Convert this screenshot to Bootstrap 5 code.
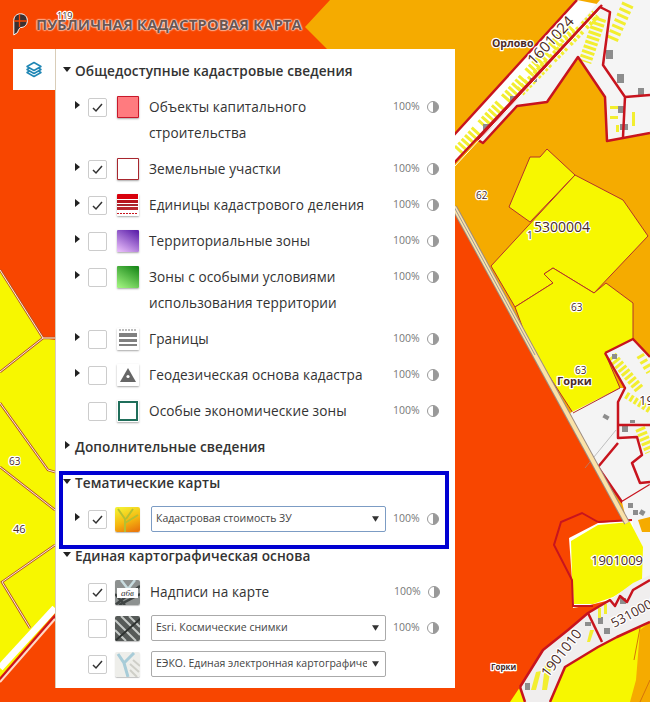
<!DOCTYPE html>
<html lang="ru">
<head>
  <meta charset="UTF-8">
  <title>Публичная кадастровая карта</title>
  <link href="https://cdn.jsdelivr.net/npm/bootstrap@5.3.0/dist/css/bootstrap.min.css" rel="stylesheet">
  <style>
    html, body { margin: 0; background: #f84600; }
    .map-page { position: relative; width: 650px; height: 702px; overflow: hidden; font-family: "Open Sans", sans-serif; }
    .map-canvas { position: absolute; left: 0; top: 0; }
    .map-canvas text { font-family: "Open Sans", sans-serif; fill: #4a2a26; paint-order: stroke; stroke: #fff; stroke-width: 2.5px; stroke-linejoin: round; }
    .map-title { position: absolute; left: 13px; top: 13px; gap: 8px; }
    .map-title span { font-size: 15px; font-weight: 700; color: #6d5650; text-shadow: 0 0 2px #fff, 0 0 2px #fff, 0 0 1px #fff; }
    .layers-win { position: absolute; left: 13px; top: 49px; }
    .layers-tab { width: 42px; height: 41px; background: #fff; }
    .layers-box { width: 400px; height: 639px; background: #fff; border-left: 1px solid #d9cdb8; padding-top: 4px; color: #333; }
    .sec-head { height: 36px; padding-left: 7px; font-size: 13.6px; font-weight: 600; gap: 4px; color: #333; letter-spacing: .08px; }
    .sec-head.push { margin-top: 1px; }
    .lyr-row { padding: 5px 0 5px 19px; }
    .lyr-cell { height: 26px; flex: none; }
    .tri-right { width: 0; height: 0; border-left: 5px solid #222; border-top: 4px solid transparent; border-bottom: 4px solid transparent; margin-top: -4px; }
    .tri-down { width: 0; height: 0; border-top: 5px solid #222; border-left: 4px solid transparent; border-right: 4px solid transparent; margin-top: -4px; }
    .sec-head .tri-right { margin-left: 2px; margin-right: 1px; }
    .cell-tri { width: 13px; }
    .cell-check { width: 19px; }
    .cell-check .form-check-input { width: 19px; height: 19px; margin: 0; border: 1px solid #ccc; border-radius: 2px; box-shadow: none; background-color: #fff; }
    .cell-check .form-check-input:checked { background-color: #fff; border-color: #ccc; background-image: url("data:image/svg+xml,%3csvg xmlns='http://www.w3.org/2000/svg' viewBox='0 0 19 19'%3e%3cpath fill='none' stroke='%23333' stroke-width='1.500' d='M5 10l3 3 6-7'/%3e%3c/svg%3e"); background-size: 19px 19px; }
    .cell-swatch { width: 22px; margin-left: 10px; }
    .cell-swatch svg { display: block; box-shadow: 0 1px 2px rgba(0,0,0,.35); border-radius: 1px; }
    .cell-thumb { width: 25px; margin-left: 8px; }
    .cell-thumb svg { display: block; box-shadow: 0 1px 1px rgba(0,0,0,.25); border-radius: 2px; }
    .lyr-name { width: 244px; margin-left: 10px; font-size: 13.6px; line-height: 26px; color: #333; letter-spacing: .1px; flex: none; }
    .cell-pct { width: 26px; font-size: 10.5px; color: #777; }
    .cell-half { margin-left: 8px; }
    .map-select.form-select { width: 235px; height: 26px; margin-left: 11px; margin-right: 7px; flex: none; padding: 0 18px 0 4px; font-size: 10.5px; font-family: "Open Sans", sans-serif; color: #444; border: 1px solid #aaa; border-radius: 2px; background-size: 7px 6px; background-position: right 6px center; background-image: url("data:image/svg+xml,%3csvg xmlns='http://www.w3.org/2000/svg' viewBox='0 0 9 7'%3e%3cpath fill='%23333' d='M0 0h9L4.500 7z'/%3e%3c/svg%3e"); box-shadow: none; }
    .map-select.sel-active { border-color: #7c9cc4; }
    .mark-frame { position: absolute; left: 59px; top: 471px; width: 390px; height: 78px; border: 4px solid #0000d2; pointer-events: none; }
  </style>
</head>
<body>
<div class="map-page">

  <!-- карта -->
  <svg class="map-canvas" width="650" height="702" viewBox="0 0 650 702">
    <rect width="650" height="702" fill="#f84600"/>
    <polygon fill="#f5ab00" points="330,0 305,27 340,62 454,207 627,523 650,523 650,0"/>

    <!-- левая часть -->
    <polygon fill="#f7f700" points="0,270 43,338 55,340 55,613 0,677"/>
    <g fill="none" stroke="#b5502a" stroke-width="2.5">
      <path d="M0 270L43 338H55M43 338L0 372M0 403L48 470L55 472M0 467L55 510M55 545L2 582L30 628"/>
    </g>
    <g fill="none" stroke="#fff2d8" stroke-width="1">
      <path d="M0 270L43 338H55M43 338L0 372M0 403L48 470L55 472M0 467L55 510M55 545L2 582L30 628"/>
    </g>
    <path d="M55 608L0 668" stroke="#fff" stroke-width="7" fill="none"/>
    <path d="M55 616L0 679" stroke="#c8141e" stroke-width="2" fill="none"/>
    <path d="M55 619L0 682" stroke="#ffd9c8" stroke-width="2" fill="none"/>

    <!-- верхняя полоса -->
    <polygon fill="#fff" points="454,135 577,0 602,5 454,163"/>
    <polygon fill="#f5f5f5" points="600,0 650,0 650,133 607,141 605,97 578,57 547,102 517,106 483,143 478,140"/>
    <path d="M458 151L574 23" stroke="#f2ee30" stroke-width="11" fill="none" stroke-dasharray="3 2 3 2 3 2 3 2 3 2 3 7"/>
    <path d="M520 92L596 14" stroke="#f2ee30" stroke-width="10" fill="none" stroke-dasharray="3 2 3 2 3 2 3 5"/>
    <path d="M600 18L585 62" stroke="#f2ee30" stroke-width="13" fill="none" stroke-dasharray="3 2"/>
    <path d="M628 4L612 40" stroke="#f2ee30" stroke-width="12" fill="none" stroke-dasharray="3 3"/>
    <g fill="#8d8d8d">
      <rect x="606" y="50" width="7" height="9"/><rect x="617" y="74" width="7" height="9"/><rect x="638" y="88" width="6" height="7"/>
      <rect x="618" y="106" width="7" height="7"/><rect x="620" y="124" width="8" height="6"/><rect x="483" y="124" width="6" height="6"/>
      <rect x="510" y="96" width="6" height="5"/><rect x="530" y="78" width="7" height="4"/>
    </g>
    <g fill="#f2ee30"><rect x="610" y="106" width="8" height="3"/><rect x="610" y="116" width="8" height="3"/><rect x="616" y="125" width="3" height="7"/><rect x="632" y="112" width="3" height="14"/></g>
    <g fill="none" stroke="#c8141e" stroke-width="2.500" stroke-linejoin="round">
      <path d="M454 135L577 0M454 163L602 5"/>
      <path d="M478 140L600 7L610 12L603 65L625 97L650 95M478 140L483 143L517 106L547 102L578 57L605 97L607 141L650 133M625 97L623 137"/>
    </g>
    <path d="M454 167L600 10" stroke="#fff" stroke-width="1" fill="none"/>

    <!-- участки -->
    <g fill="#f7f700" stroke="#b4322a" stroke-width="1">
      <polygon points="530,157 540,157 547,149 575,175 530,222 509,207"/>
      <polygon points="575,175 623,200 648,236 594,293 553,268 544,274 553,283 515,307 491,266"/>
      <polygon points="515,307 553,283 544,274 553,268 594,293 606,283 633,303 633,340 605,353 620,388 573,413 529,345"/>
    </g>

    <!-- правая середина -->
    <polygon fill="#f4f4f4" points="570,413 620,388 625,388 618,402 618,443 598,467 622,502 650,485 650,357 633,339 605,353 625,388 618,402 618,443 598,467 598,472"/>
    <path d="M612 356L640 390" stroke="#f2ee30" stroke-width="10" fill="none" stroke-dasharray="3 2"/>
    <path d="M640 355L650 372" stroke="#f2ee30" stroke-width="8" fill="none" stroke-dasharray="3 3"/>
    <path d="M626 395L650 410" stroke="#f2ee30" stroke-width="7" fill="none" stroke-dasharray="3 2"/>
    <path d="M640 428L650 452" stroke="#f2ee30" stroke-width="10" fill="none" stroke-dasharray="3 2"/>
    <g fill="#8d8d8d"><rect x="612" y="354" width="5" height="5"/><rect x="622" y="426" width="6" height="6"/><rect x="630" y="420" width="5" height="3"/><rect x="603" y="415" width="6" height="4" transform="rotate(30 606 417)"/></g>
    <path d="M585 468L616 430" stroke="#999" stroke-width=".6" fill="none"/>
    <g fill="none" stroke="#c8141e" stroke-width="2.500" stroke-linejoin="round">
      <path d="M605 353L633 339L650 357M605 353L625 388L618 402V438L637 437L642 455L632 463L640 483L650 482M618 425H650"/>
      <path d="M618 443L598 467L622 502L650 485"/>
    </g>
    <path d="M573 413L620 388" stroke="#b4322a" stroke-width="1"/>

    <!-- низ справа -->
    <polygon fill="#f5f5f5" points="622,502 650,485 650,600 620,590 612,530 627,523"/>
    <polygon fill="#f5ab00" points="638,520 650,517 650,532 642,532"/>
    <g fill="#8d8d8d"><rect x="628" y="503" width="5" height="5"/><rect x="633" y="510" width="5" height="5"/><rect x="640" y="510" width="5" height="5" transform="rotate(30 642 512)"/></g>
    <polygon fill="#fff" points="569,538 598,523 632,520 640,560 640,585 610,600 590,605 573,608 572,580"/>
    <polygon fill="#f7f700" points="571,541 598,525 630,522 643,547 642,579 613,597 593,604 574,604 572,577"/>
    <path d="M598 522L632 520M598 522L582 513L561 522L554 545L572 580L573 606H593" fill="none" stroke="#c8141e" stroke-width="2"/>

    <polygon fill="#f7f700" points="510,702 520,687 525,702"/>
    <polygon fill="#f7f700" points="550,702 565,667 598,647 617,637 650,622 650,702"/>
    <polygon fill="#f5ab00" points="630,702 636,680 640,630 650,622 650,702"/>
    <path d="M640 702L650 680M634 660L640 628" stroke="#d8740a" stroke-width="1" fill="none"/>
    <polygon fill="#f0eeee" points="520,687 543,650 568,630 588,613 610,600 633,583 650,575 650,622 617,637 598,647 565,667 550,702 525,702"/>
    <g fill="#8d8d8d"><rect x="525" y="683" width="5" height="7"/><rect x="585" y="622" width="6" height="4"/><rect x="598" y="617" width="5" height="7"/><rect x="604" y="628" width="6" height="6"/><rect x="620" y="598" width="6" height="6"/></g>
    <g fill="#f2ee30"><polygon points="536,672 541,671 536,690 531,690"/><polygon points="545,665 552,662 547,690 542,690"/><polygon points="590,630 594,630 590,642 587,642"/><rect x="598" y="608" width="3" height="10"/><rect x="604" y="604" width="3" height="10"/></g>
    <g fill="none" stroke="#c8141e" stroke-width="2.500" stroke-linejoin="round">
      <path d="M520 687L543 650L568 630L588 613L610 600L615 606L620 596L627 602L633 590L650 580"/>
      <path d="M520 687L525 702M550 702L565 667L598 647L617 637L650 622"/>
      <path d="M588 613L602 642"/>
    </g>

    <!-- дорога -->
    <path d="M454 207L627 523" stroke="#9c8c80" stroke-width="6" fill="none"/>
    <path d="M454 207L627 523" stroke="#fbe2a8" stroke-width="4" fill="none"/>
    <path d="M453 205L535 355" stroke="#999" stroke-width="1" fill="none"/>

    <!-- подписи -->
    <text x="9" y="465" font-size="10" text-anchor="start">63</text>
    <text x="13" y="533" font-size="11">46</text>
    <text x="476" y="199" font-size="10">62</text>
    <text x="571" y="311" font-size="10">63</text>
    <text x="575" y="374" font-size="10">63</text>
    <text x="527" y="239" font-size="10">1</text>
    <text x="534" y="232" font-size="14">5300004</text>
    <text x="591" y="565" font-size="13">1901009</text>
    <text x="639" y="405" font-size="13">19</text>
    <text x="492" y="47" font-size="10.500" font-weight="700">Орлово</text>
    <text x="557" y="385" font-size="11" font-weight="700">Горки</text>
    <text x="491" y="670" font-size="8" font-weight="700">Горки</text>
    <text x="0" y="0" font-size="15" transform="translate(534 66) rotate(-47)">1601024</text>
    <text x="0" y="0" font-size="14" transform="translate(548 678) rotate(-52)">1901010</text>
    <text x="0" y="0" font-size="13" transform="translate(614 628) rotate(-28)">5310000</text>
    <text x="57" y="19" font-size="9">119</text>
  </svg>

  <div class="map-title d-flex align-items-center">
    <svg width="15" height="23" viewBox="0 0 15 23"><path d="M7.500 .8C3.500 .8 .8 3.500 .8 7.500V22L4.500 19.500C5.500 17 6 15.500 7.500 14.500C12 14.500 14.300 11.500 14.300 7.500C14.300 3.500 11.500 .8 7.500 .8Z" fill="#3a3030" stroke="#fff" stroke-width="1"/><path d="M6.500 1V14M1 8H14" stroke="#f84600" stroke-width="1.300"/></svg>
    <span>ПУБЛИЧНАЯ КАДАСТРОВАЯ КАРТА</span>
  </div>

  <!-- окно слоёв -->
  <div class="layers-win d-flex align-items-start">
    <div class="layers-tab d-flex align-items-center justify-content-center">
      <svg width="18" height="18" viewBox="0 0 18 18" fill="#fff" stroke="#1f86b4" stroke-width="1.500" stroke-linejoin="round"><path d="M2 11.500L9 15.500L16 11.500L9 7.500Z"/><path d="M2 8.500L9 12.500L16 8.500L9 4.500Z"/><path d="M2 5.500L9 9.500L16 5.500L9 1.500Z"/></svg>
    </div>
    <div class="layers-box">

      <div class="sec-head d-flex align-items-center"><i class="tri-down"></i>Общедоступные кадастровые сведения</div>

      <div class="lyr-row d-flex align-items-start">
        <div class="lyr-cell cell-tri d-flex align-items-center"><i class="tri-right"></i></div>
        <div class="lyr-cell cell-check d-flex align-items-center"><input class="form-check-input" type="checkbox" checked></div>
        <div class="lyr-cell cell-swatch d-flex align-items-center"><svg width="22" height="22" viewBox="0 0 22 22"><rect x=".5" y=".5" width="21" height="21" fill="#ff7b7f" stroke="#c8182a"/></svg></div>
        <div class="lyr-name">Объекты капитального строительства</div>
        <div class="lyr-cell cell-pct d-flex align-items-center">100%</div>
        <div class="lyr-cell cell-half d-flex align-items-center"><svg width="12" height="12" viewBox="0 0 12 12"><circle cx="6" cy="6" r="5.500" fill="#fff" stroke="#999"/><path d="M6 .5A5.500 5.500 0 0 1 6 11.500Z" fill="#999"/></svg></div>
      </div>

      <div class="lyr-row d-flex align-items-start">
        <div class="lyr-cell cell-tri d-flex align-items-center"><i class="tri-right"></i></div>
        <div class="lyr-cell cell-check d-flex align-items-center"><input class="form-check-input" type="checkbox" checked></div>
        <div class="lyr-cell cell-swatch d-flex align-items-center"><svg width="22" height="22" viewBox="0 0 22 22"><rect x=".5" y=".5" width="21" height="21" fill="#fff" stroke="#a8262e"/></svg></div>
        <div class="lyr-name">Земельные участки</div>
        <div class="lyr-cell cell-pct d-flex align-items-center">100%</div>
        <div class="lyr-cell cell-half d-flex align-items-center"><svg width="12" height="12" viewBox="0 0 12 12"><circle cx="6" cy="6" r="5.500" fill="#fff" stroke="#999"/><path d="M6 .5A5.500 5.500 0 0 1 6 11.500Z" fill="#999"/></svg></div>
      </div>

      <div class="lyr-row d-flex align-items-start">
        <div class="lyr-cell cell-tri d-flex align-items-center"><i class="tri-right"></i></div>
        <div class="lyr-cell cell-check d-flex align-items-center"><input class="form-check-input" type="checkbox" checked></div>
        <div class="lyr-cell cell-swatch d-flex align-items-center"><svg width="22" height="22" viewBox="0 0 22 22"><rect width="22" height="22" fill="#fff"/><rect width="21" height="5" fill="#d8000c"/><rect y="6" width="21" height="3" fill="#b8141e"/><rect y="10" width="21" height="2" fill="#a8262e"/><rect y="13" width="21" height="3" fill="#b8262e"/><path d="M0 19.500H21" stroke="#c8141e" stroke-dasharray="2 1"/></svg></div>
        <div class="lyr-name">Единицы кадастрового деления</div>
        <div class="lyr-cell cell-pct d-flex align-items-center">100%</div>
        <div class="lyr-cell cell-half d-flex align-items-center"><svg width="12" height="12" viewBox="0 0 12 12"><circle cx="6" cy="6" r="5.500" fill="#fff" stroke="#999"/><path d="M6 .5A5.500 5.500 0 0 1 6 11.500Z" fill="#999"/></svg></div>
      </div>

      <div class="lyr-row d-flex align-items-start">
        <div class="lyr-cell cell-tri d-flex align-items-center"><i class="tri-right"></i></div>
        <div class="lyr-cell cell-check d-flex align-items-center"><input class="form-check-input" type="checkbox"></div>
        <div class="lyr-cell cell-swatch d-flex align-items-center"><svg width="22" height="22" viewBox="0 0 22 22"><defs><linearGradient id="gradPurple" x1=".8" y1="0" x2=".2" y2="1"><stop offset="0" stop-color="#5f23ac"/><stop offset="1" stop-color="#e4b8f8"/></linearGradient></defs><rect width="22" height="22" fill="url(#gradPurple)"/></svg></div>
        <div class="lyr-name">Территориальные зоны</div>
        <div class="lyr-cell cell-pct d-flex align-items-center">100%</div>
        <div class="lyr-cell cell-half d-flex align-items-center"><svg width="12" height="12" viewBox="0 0 12 12"><circle cx="6" cy="6" r="5.500" fill="#fff" stroke="#999"/><path d="M6 .5A5.500 5.500 0 0 1 6 11.500Z" fill="#999"/></svg></div>
      </div>

      <div class="lyr-row d-flex align-items-start">
        <div class="lyr-cell cell-tri d-flex align-items-center"><i class="tri-right"></i></div>
        <div class="lyr-cell cell-check d-flex align-items-center"><input class="form-check-input" type="checkbox"></div>
        <div class="lyr-cell cell-swatch d-flex align-items-center"><svg width="22" height="22" viewBox="0 0 22 22"><defs><linearGradient id="gradGreen" x1=".8" y1="0" x2=".2" y2="1"><stop offset="0" stop-color="#1b8a1b"/><stop offset="1" stop-color="#9cf07c"/></linearGradient></defs><rect width="22" height="22" fill="url(#gradGreen)"/></svg></div>
        <div class="lyr-name">Зоны с особыми условиями использования территории</div>
        <div class="lyr-cell cell-pct d-flex align-items-center">100%</div>
        <div class="lyr-cell cell-half d-flex align-items-center"><svg width="12" height="12" viewBox="0 0 12 12"><circle cx="6" cy="6" r="5.500" fill="#fff" stroke="#999"/><path d="M6 .5A5.500 5.500 0 0 1 6 11.500Z" fill="#999"/></svg></div>
      </div>

      <div class="lyr-row d-flex align-items-start">
        <div class="lyr-cell cell-tri d-flex align-items-center"><i class="tri-right"></i></div>
        <div class="lyr-cell cell-check d-flex align-items-center"><input class="form-check-input" type="checkbox"></div>
        <div class="lyr-cell cell-swatch d-flex align-items-center"><svg width="22" height="22" viewBox="0 0 22 22"><rect width="22" height="22" fill="#fff"/><path d="M2 2H20" stroke="#777" stroke-dasharray="2 1"/><rect x="2" y="5" width="18" height="4" fill="#808080"/><rect x="2" y="11" width="18" height="3" fill="#808080"/><rect x="2" y="16" width="18" height="2" fill="#808080"/></svg></div>
        <div class="lyr-name">Границы</div>
        <div class="lyr-cell cell-pct d-flex align-items-center">100%</div>
        <div class="lyr-cell cell-half d-flex align-items-center"><svg width="12" height="12" viewBox="0 0 12 12"><circle cx="6" cy="6" r="5.500" fill="#fff" stroke="#999"/><path d="M6 .5A5.500 5.500 0 0 1 6 11.500Z" fill="#999"/></svg></div>
      </div>

      <div class="lyr-row d-flex align-items-start">
        <div class="lyr-cell cell-tri d-flex align-items-center"><i class="tri-right"></i></div>
        <div class="lyr-cell cell-check d-flex align-items-center"><input class="form-check-input" type="checkbox"></div>
        <div class="lyr-cell cell-swatch d-flex align-items-center"><svg width="22" height="22" viewBox="0 0 22 22"><rect width="22" height="22" fill="#fff"/><path d="M11 4L19 18H3Z" fill="#666"/><circle cx="11" cy="12.500" r="1.600" fill="#fff"/></svg></div>
        <div class="lyr-name">Геодезическая основа кадастра</div>
        <div class="lyr-cell cell-pct d-flex align-items-center">100%</div>
        <div class="lyr-cell cell-half d-flex align-items-center"><svg width="12" height="12" viewBox="0 0 12 12"><circle cx="6" cy="6" r="5.500" fill="#fff" stroke="#999"/><path d="M6 .5A5.500 5.500 0 0 1 6 11.500Z" fill="#999"/></svg></div>
      </div>

      <div class="lyr-row d-flex align-items-start">
        <div class="lyr-cell cell-tri"></div>
        <div class="lyr-cell cell-check d-flex align-items-center"><input class="form-check-input" type="checkbox"></div>
        <div class="lyr-cell cell-swatch d-flex align-items-center"><svg width="22" height="22" viewBox="0 0 22 22"><rect x="2" y="2" width="18" height="18" fill="#fff" stroke="#1f6e5a" stroke-width="2"/></svg></div>
        <div class="lyr-name">Особые экономические зоны</div>
        <div class="lyr-cell cell-pct d-flex align-items-center">100%</div>
        <div class="lyr-cell cell-half d-flex align-items-center"><svg width="12" height="12" viewBox="0 0 12 12"><circle cx="6" cy="6" r="5.500" fill="#fff" stroke="#999"/><path d="M6 .5A5.500 5.500 0 0 1 6 11.500Z" fill="#999"/></svg></div>
      </div>

      <div class="sec-head d-flex align-items-center"><i class="tri-right"></i>Дополнительные сведения</div>
      <div class="sec-head d-flex align-items-center"><i class="tri-down"></i>Тематические карты</div>

      <div class="lyr-row d-flex align-items-start">
        <div class="lyr-cell cell-tri d-flex align-items-center"><i class="tri-right"></i></div>
        <div class="lyr-cell cell-check d-flex align-items-center"><input class="form-check-input" type="checkbox" checked></div>
        <div class="lyr-cell cell-thumb d-flex align-items-center"><svg width="25" height="25" viewBox="0 0 25 25"><defs><linearGradient id="gradTheme" x1=".3" y1="0" x2=".7" y2="1"><stop offset="0" stop-color="#f4ee30"/><stop offset=".55" stop-color="#f5b810"/><stop offset="1" stop-color="#ea7a0c"/></linearGradient></defs><rect width="25" height="25" fill="url(#gradTheme)"/><path d="M3 2L10 12V25M18 2L11 12M23 8L10 16" fill="none" stroke="#b5c030" stroke-width="2"/></svg></div>
        <select class="form-select map-select sel-active"><option>Кадастровая стоимость ЗУ</option></select>
        <div class="lyr-cell cell-pct d-flex align-items-center">100%</div>
        <div class="lyr-cell cell-half d-flex align-items-center"><svg width="12" height="12" viewBox="0 0 12 12"><circle cx="6" cy="6" r="5.500" fill="#fff" stroke="#999"/><path d="M6 .5A5.500 5.500 0 0 1 6 11.500Z" fill="#999"/></svg></div>
      </div>

      <div class="sec-head push d-flex align-items-center"><i class="tri-down"></i>Единая картографическая основа</div>

      <div class="lyr-row d-flex align-items-start">
        <div class="lyr-cell cell-tri"></div>
        <div class="lyr-cell cell-check d-flex align-items-center"><input class="form-check-input" type="checkbox" checked></div>
        <div class="lyr-cell cell-thumb d-flex align-items-center"><svg width="25" height="25" viewBox="0 0 25 25"><rect width="25" height="25" fill="#8d9190"/><path d="M0 25L25 6M4 25L25 14M0 14L10 25" stroke="#3f4443" stroke-width="2.500"/><path d="M6 0L13 9M20 0L13 9" stroke="#c9dde0" stroke-width="2.500"/><rect x="2" y="8" width="21" height="10" fill="#fff"/><text x="12.500" y="16" font-size="9" font-style="italic" text-anchor="middle" font-family="Liberation Serif, serif" fill="#333">абв</text></svg></div>
        <div class="lyr-name">Надписи на карте</div>
        <div class="lyr-cell cell-pct d-flex align-items-center">100%</div>
        <div class="lyr-cell cell-half d-flex align-items-center"><svg width="12" height="12" viewBox="0 0 12 12"><circle cx="6" cy="6" r="5.500" fill="#fff" stroke="#999"/><path d="M6 .5A5.500 5.500 0 0 1 6 11.500Z" fill="#999"/></svg></div>
      </div>

      <div class="lyr-row d-flex align-items-start">
        <div class="lyr-cell cell-tri"></div>
        <div class="lyr-cell cell-check d-flex align-items-center"><input class="form-check-input" type="checkbox"></div>
        <div class="lyr-cell cell-thumb d-flex align-items-center"><svg width="25" height="25" viewBox="0 0 25 25"><rect width="25" height="25" fill="#565a58"/><path d="M0 4L21 25M6 0L25 19M0 14L11 25M14 0L25 11" stroke="#c5c9c6" stroke-width="2"/><path d="M0 25L25 3" stroke="#2e3230" stroke-width="2"/></svg></div>
        <select class="form-select map-select"><option>Esri. Космические снимки</option></select>
        <div class="lyr-cell cell-pct d-flex align-items-center">100%</div>
        <div class="lyr-cell cell-half d-flex align-items-center"><svg width="12" height="12" viewBox="0 0 12 12"><circle cx="6" cy="6" r="5.500" fill="#fff" stroke="#999"/><path d="M6 .5A5.500 5.500 0 0 1 6 11.500Z" fill="#999"/></svg></div>
      </div>

      <div class="lyr-row d-flex align-items-start">
        <div class="lyr-cell cell-tri"></div>
        <div class="lyr-cell cell-check d-flex align-items-center"><input class="form-check-input" type="checkbox" checked></div>
        <div class="lyr-cell cell-thumb d-flex align-items-center"><svg width="25" height="25" viewBox="0 0 25 25"><rect width="25" height="25" fill="#eeeeea"/><path d="M13 25L9 11L3 2M9 11L19 1" fill="none" stroke="#a8ccd8" stroke-width="3"/><path d="M15 12L24 20M18 8L25 14M15 18L22 25" stroke="#cfcfc8" stroke-width="2"/></svg></div>
        <select class="form-select map-select"><option>ЕЭКО. Единая электронная картографическая основа</option></select>
      </div>
    </div>
  </div>

  <div class="mark-frame"></div>
</div>
<script src="https://cdn.jsdelivr.net/npm/bootstrap@5.3.0/dist/js/bootstrap.bundle.min.js"></script>
</body>
</html>
